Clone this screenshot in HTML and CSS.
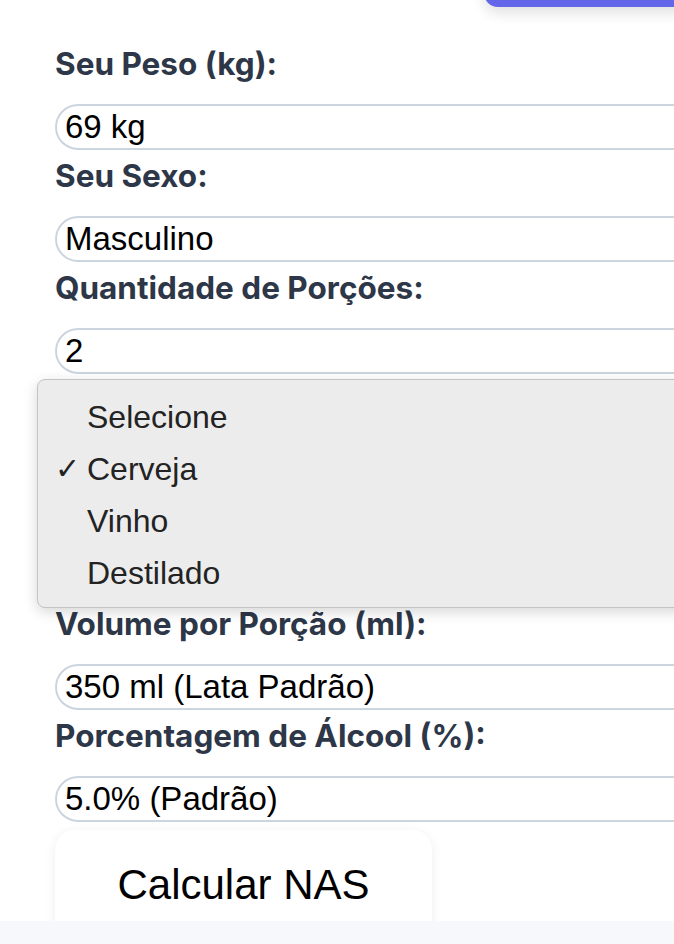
FILE: index.html
```html
<!DOCTYPE html>
<html lang="pt-BR">
<head>
<meta charset="utf-8">
<title>Calculadora NAS</title>
<link rel="stylesheet" href="styles.css">
</head>
<body>
<div class="page">
  <div class="top-tab"></div>
  <form class="form">
    <div class="field">
      <label class="label">Seu Peso (kg):</label>
      <div class="input">69 kg</div>
    </div>
    <div class="field">
      <label class="label">Seu Sexo:</label>
      <div class="input">Masculino</div>
    </div>
    <div class="field">
      <label class="label">Quantidade de Porções:</label>
      <div class="input">2</div>
    </div>
    <div class="field covered">
      <label class="label">Tipo de Bebida:</label>
      <div class="input">Cerveja</div>
    </div>
    <div class="field covered">
      <label class="label">Tipo de Recipiente:</label>
      <div class="input">Lata</div>
    </div>
    <div class="field">
      <label class="label">Volume por Porção (ml):</label>
      <div class="input">350 ml (Lata Padrão)</div>
    </div>
    <div class="field">
      <label class="label">Porcentagem de Álcool (%):</label>
      <div class="input">5.0% (Padrão)</div>
    </div>
    <div class="button">Calcular NAS</div>
  </form>
  <ul class="popup">
    <li class="option">Selecione</li>
    <li class="option checked"><span class="check">✓</span>Cerveja</li>
    <li class="option">Vinho</li>
    <li class="option">Destilado</li>
  </ul>
</div>
<div class="footer-strip"></div>
</body>
</html>
```
FILE: styles.css
```css
html, body {
  margin: 0;
  padding: 0;
  background: #f7f8fc;
  overflow: hidden;
}
.page {
  position: relative;
  height: 921px;
  background: #ffffff;
  overflow: hidden;
}
.top-tab {
  position: absolute;
  top: -40px;
  left: 484px;
  width: 260px;
  height: 47px;
  background: #6466e9;
  border-radius: 14px;
  box-shadow: 0 6px 14px rgba(0, 0, 0, 0.12);
}
.form {
  padding: 46px 0 0 55px;
  margin: 0;
  display: flex;
  flex-direction: column;
}
.field {
  display: flex;
  flex-direction: column;
  margin-bottom: 8px;
}
.covered {
  visibility: hidden;
}
.label {
  font-family: "Inter", "Noto Sans", sans-serif;
  font-weight: 700;
  font-size: 31.5px;
  line-height: 36px;
  color: #2d3748;
  margin-bottom: 22px;
}
.input {
  box-sizing: border-box;
  width: 700px;
  height: 46px;
  border: 2px solid #cbd5e0;
  border-radius: 23px;
  padding: 0 8px;
  font-family: "Liberation Sans", Arial, sans-serif;
  font-size: 33px;
  line-height: 42px;
  color: #000;
}
.field:last-of-type {
  margin-bottom: 6px;
}
.button {
  box-sizing: border-box;
  width: 377px;
  height: 120px;
  padding-top: 30px;
  background: #ffffff;
  border-radius: 20px;
  box-shadow: 0 2px 12px rgba(0, 0, 0, 0.07);
  font-family: "Liberation Sans", Arial, sans-serif;
  font-size: 42px;
  line-height: 50px;
  text-align: center;
  color: #000;
}
.popup {
  position: absolute;
  top: 379px;
  left: 37px;
  width: 700px;
  margin: 0;
  padding: 11px 0 8px 0;
  list-style: none;
  background: #ececec;
  border: 1px solid #c4c4c4;
  border-radius: 8px;
  box-shadow: 0 4px 14px rgba(0, 0, 0, 0.16);
}
.option {
  position: relative;
  padding-left: 49px;
  font-family: "Liberation Sans", Arial, sans-serif;
  font-size: 32px;
  line-height: 52px;
  color: #232323;
}
.check {
  position: absolute;
  left: 17px;
  font-family: "DejaVu Sans", sans-serif;
  font-weight: 700;
  font-size: 30px;
}
.footer-strip {
  height: 23px;
  background: #f7f8fc;
}
```
